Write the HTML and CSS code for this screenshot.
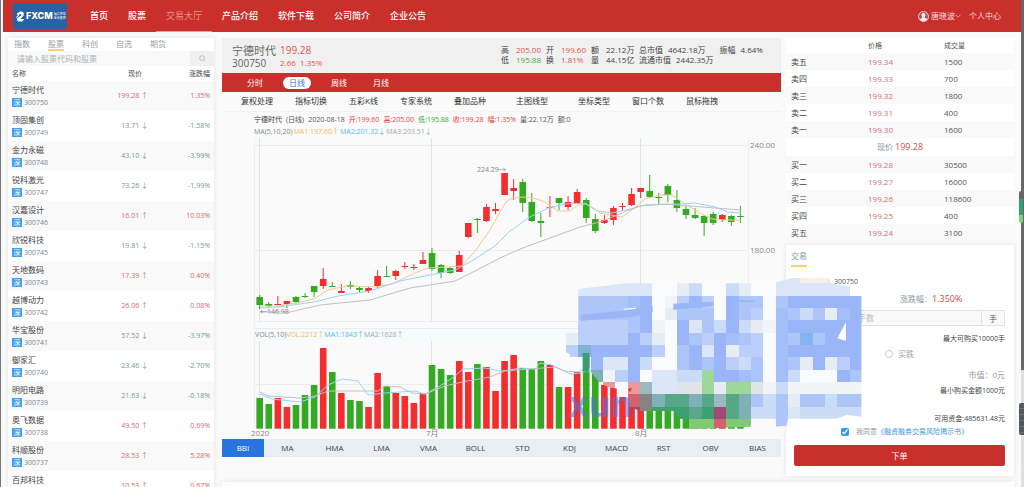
FILE: index.html
```html
<!DOCTYPE html>
<html lang="zh-CN">
<head>
<meta charset="utf-8">
<title>交易大厅</title>
<link rel="stylesheet" href="styles.css">
</head>
<body>
<div class="page">
  <header class="topbar">
    <a class="logo" href="#" aria-label="FXCM">
      <svg class="logo-mark" viewBox="0 0 9 11" aria-hidden="true">
        <path d="M1 2.6 4.2.6C7.6.2 8.8 3 7.2 5L4.6 8H8.4L6.2 10.4H2.4C.4 9.6.6 7.8 2 6.6L5 4.4C5.6 3.2 4.6 2.8 3.6 3.2L1.4 4.6Z" fill="#fff"/>
        <path d="M0 6.6 3 4.2" stroke="#fff" stroke-width="1"/>
      </svg>
      <span class="logo-name">FXCM</span>
      <span class="logo-sub"><span>福汇环球</span><span>金业集团</span></span>
    </a>
    <nav class="nav">
      <a href="#">首页</a><a href="#">股票</a><a href="#" class="active">交易大厅</a><a href="#">产品介绍</a><a href="#">软件下载</a><a href="#">公司简介</a><a href="#">企业公告</a>
    </nav>
    <div class="user">
      <svg class="avatar" viewBox="0 0 20 20" aria-hidden="true"><circle cx="10" cy="10" r="9" fill="#b9474a" stroke="#eee" stroke-width="1.6"/><path d="M10 3.5c3 0 4 2 3.6 4.6-.2 1.6-1 2.4-1.4 3.2 0 1.600 3.800 1.400 4.600 4.400C14 19 6 19 3.200 15.700c.8-3 4.600-2.800 4.600-4.400-.4-.8-1.200-1.600-1.400-3.200C6 5.500 7 3.500 10 3.500Z" fill="#eee"/></svg>
      <a href="#">唐晓波</a>
      <svg class="caret" viewBox="0 0 12 8" aria-hidden="true"><path d="M1 1.500 6 6.500 11 1.500" fill="none" stroke="#f3d5d5" stroke-width="1.400"/></svg>
      <a href="#" class="center-link">个人中心</a>
    </div>
  </header>

  <main class="main">
    <section class="stocks">
      <nav class="stock-tabs"><a href="#">指数</a><a href="#" class="active">股票</a><a href="#">科创</a><a href="#">自选</a><a href="#">期货</a></nav>
      <form class="search">
        <input type="text" aria-label="搜索股票" placeholder="请输入股票代码和股票">
        <button type="button" aria-label="搜索"><svg viewBox="0 0 16 16"><circle cx="7" cy="7" r="5.500" fill="none" stroke="#aaa" stroke-width="1.500"/><path d="m11 11 3.500 3.500" stroke="#aaa" stroke-width="1.500"/></svg></button>
      </form>
      <table class="stock-table">
        <thead><tr><th>名称</th><th>现价</th><th>涨跌幅</th></tr></thead>
        <tbody id="stock-rows"></tbody>
      </table>
    </section>

    <section class="quote">
      <div class="summary">
        <div class="summary-main">
          <span class="s-name">宁德时代</span><span class="s-price">199.28</span>
          <span class="s-code">300750</span><span class="s-change">2.66&nbsp; 1.35%</span>
        </div>
        <div class="summary-stats">
          <div><span>高</span><b class="up">205.00</b><span>开</span><b class="up">199.60</b><span>额</span><b>22.12万</b><span class="wide">总市值</span><b class="cap">4642.18万</b><span class="wide">振幅</span><b>4.64%</b></div>
          <div><span>低</span><b class="down">195.88</b><span>换</span><b class="up">1.81%</b><span>量</span><b>44.15亿</b><span class="wide">流通市值</span><b class="cap">2442.35万</b></div>
        </div>
      </div>
      <div class="periods"><button type="button">分时</button><button type="button" class="active">日线</button><button type="button">周线</button><button type="button">月线</button></div>
      <div class="tools"><a href="#">复权处理</a><a href="#">指标切换</a><a href="#">五彩K线</a><a href="#">专家系统</a><a href="#">叠加品种</a><a href="#" class="apart">主图线型</a><a href="#" class="apart">坐标类型</a><a href="#">窗口个数</a><a href="#">鼠标拖拽</a></div>
      <div class="chart-head"><span class="dark">宁德时代</span><span>(日线)</span><span>2020-08-18</span><span class="red">开:199.60</span><span class="red">高:205.00</span><span class="green">低:195.88</span><span class="red">收:199.28</span><span class="red">幅:1.35%</span><span>量:22.12万</span><span>额:0</span></div>
      <div class="chart-ma"><span>MA(5,10,20)</span><span class="ma1">MA1:197.60↑</span><span class="ma2">MA2:201.32↓</span><span class="ma3">MA3:203.51↓</span></div>
      <svg class="chart" id="chart" viewBox="222 138 559 301" role="img" aria-label="K线图"></svg>
      <div class="indicators"><button type="button" class="active">BBI</button><button type="button">MA</button><button type="button">HMA</button><button type="button">LMA</button><button type="button">VMA</button><button type="button">BOLL</button><button type="button">STD</button><button type="button">KDJ</button><button type="button">MACD</button><button type="button">RST</button><button type="button">OBV</button><button type="button">BIAS</button></div>
    </section>

    <aside class="side">
      <table class="book">
        <thead><tr><th></th><th>价格</th><th>成交量</th></tr></thead>
        <tbody>
          <tr><td>卖五</td><td>199.34</td><td>1500</td></tr>
          <tr><td>卖四</td><td>199.33</td><td>700</td></tr>
          <tr><td>卖三</td><td>199.32</td><td>1800</td></tr>
          <tr><td>卖二</td><td>199.31</td><td>400</td></tr>
          <tr><td>卖一</td><td>199.30</td><td>1600</td></tr>
          <tr class="now"><td colspan="3">现价 <b>199.28</b></td></tr>
          <tr><td>买一</td><td>199.28</td><td>30500</td></tr>
          <tr><td>买二</td><td>199.27</td><td>16000</td></tr>
          <tr><td>买三</td><td>199.26</td><td>118600</td></tr>
          <tr><td>买四</td><td>199.25</td><td>400</td></tr>
          <tr><td>买五</td><td>199.24</td><td>3100</td></tr>
        </tbody>
      </table>
      <form class="trade">
        <h2>交易</h2>
        <p class="t-symbol"><span>宁德时代</span>300750</p>
        <p class="t-rate">涨跌幅：<b>1.350%</b></p>
        <div class="t-amount"><input type="text" aria-label="手数" placeholder="请输入手数"><span>手</span></div>
        <p class="t-note">最大可购买10000手</p>
        <div class="t-side"><label><input type="radio" name="side" checked>买涨</label><label><input type="radio" name="side">买跌</label></div>
        <p class="t-value">市值：0元</p>
        <p class="t-note">最小购买金额1000元</p>
        <p class="t-note t-funds">可用资金:485631.48元</p>
        <div class="t-agree"><input type="checkbox" id="agree" checked><label for="agree">我同意</label><a href="#">《融资融券交易风险揭示书》</a></div>
        <button type="button" class="t-submit">下单</button>
      </form>
    </aside>
  </main>
  <section class="below"></section>
  <svg class="mosaic" id="mosaic" viewBox="0 0 930 480" aria-hidden="true"></svg>
  <div class="edge-left"></div>
  <div class="edge-right"></div>
  <div class="edge-meter"></div>
  <div class="edge-handle"></div>
</div>
<script src="app.js"></script>
</body>
</html>
```
FILE: styles.css
```css
* { box-sizing: border-box; }
body {
  margin: 0;
  background: #fafafa;
  color: #555;
  font: 8px/10px "Open Sans", "Noto Sans", "Noto Sans CJK SC", sans-serif;
}
a { color: inherit; text-decoration: none; }
button { font: inherit; color: inherit; border: 0; padding: 0; background: none; }
input { font: inherit; }
p, h2 { margin: 0; font-weight: 400; }
b { font-weight: 400; }
.page { position: relative; height: 100vh; overflow: hidden; }

.topbar { display: flex; align-items: center; height: 32px; margin: 0 3px; background: #c9302c; color: #fff; }
.logo { display: flex; align-items: center; gap: 1px; width: 54px; height: 26px; margin-left: 10px; padding-left: 3px; background: #2762a3; }
.logo-mark { flex: none; width: 9px; height: 11px; }
.logo-name { font: 800 9px/10px Inter, sans-serif; }
.logo-sub { display: flex; flex-direction: column; font-size: 3px; line-height: 4px; white-space: nowrap; }
.nav { display: flex; align-self: stretch; margin-left: 13px; font-size: 9px; font-weight: 500; }
.nav a { padding: 0 10px; line-height: 32px; }
.nav .active { color: #e8928f; font-weight: 400; box-shadow: inset 0 -1px #ed9b98; }
.user { display: flex; align-items: center; margin: 0 20px 0 auto; color: #f6dcdc; }
.avatar { width: 11px; height: 11px; margin-right: 2px; }
.caret { width: 6px; height: 4px; }
.center-link { margin-left: 8px; }

.main { display: grid; grid-template-columns: 206px minmax(0, 1fr) 228px; column-gap: 5px; align-items: start; height: 444px; padding: 6px 10px 0 8px; }

.stocks { background: #fff; box-shadow: 0 0 5px #e2e4e6; }
.stock-tabs { display: flex; gap: 18px; padding-left: 6px; color: #9aa0a6; }
.stock-tabs a { height: 13px; line-height: 12px; }
.stock-tabs .active { border-bottom: 2px solid #f5cf86; }
.search { display: flex; height: 15px; background: #f9f9f9; }
.search input { flex: 1; min-width: 0; border: 0; padding: 0 9px; background: none; }
.search input::placeholder { color: #aeb2b6; }
.search button { width: 24px; background: #f0f0f0; }
.search svg { display: block; width: 7px; height: 7px; margin: auto; }
.stock-table { width: 100%; border-collapse: collapse; table-layout: fixed; font-size: 7px; }
.stock-table th { height: 15px; padding: 0; font-weight: 400; color: #4c4c4c; text-align: left; }
.stock-table th:nth-child(1) { width: 98px; padding-left: 4px; }
.stock-table th:nth-child(2) { width: 42px; padding-left: 22px; }
.stock-table th:nth-child(3), .stock-table td:nth-child(3) { padding-right: 4px; text-align: right; }
.stock-table td { height: 30px; padding: 0; color: #6e9a93; }
.stock-table td:nth-child(1) { padding-left: 4px; color: #7e8790; }
.stock-table td:nth-child(2) { text-align: right; }
.stock-table tr:nth-child(odd) td { background: #f9f9f9; }
.stock-table tr.rise td:nth-child(n+2) { color: #cc6b70; }
.stock-name { display: block; margin-bottom: 3px; font-size: 8px; color: #444; }
.badge { display: inline-block; width: 10px; margin-right: 2px; line-height: 9px; text-align: center; color: #fff; background: #409ef5; }

.quote { margin-left: 3px; }
.summary { display: flex; height: 35px; padding: 6px 19px 0 10px; background: #f0f0f0; }
.summary-main { display: grid; grid-template-columns: 44px auto; column-gap: 4px; align-content: start; line-height: 13px; color: #666; }
.s-name { font-size: 11px; }
.s-code { font-size: 10px; line-height: 12px; }
.s-price { font-size: 10px; color: #e5544e; }
.s-change { color: #e5544e; line-height: 12px; }
.summary-stats { width: 261px; margin: 1px 0 0 auto; color: #444; }
.summary-stats div { display: flex; white-space: nowrap; }
.summary-stats span { flex: none; width: 15px; }
.summary-stats b { flex: none; width: 30px; }
.summary-stats .wide { width: auto; margin: 0 5px 0 3px; }
.summary-stats .cap { width: auto; margin-right: 11px; }
.summary-stats .up { color: #e5544e; }
.summary-stats .down { color: #3dae43; }
.periods { display: flex; gap: 14px; align-items: center; height: 19px; padding-left: 19px; background: #c9302c; color: #fff; }
.periods button { width: 28px; height: 12px; border-radius: 6px; }
.periods .active { background: #fff; color: #3a7be0; }
.tools { display: flex; gap: 22px; height: 20px; padding-left: 19px; line-height: 18px; white-space: nowrap; color: #333; border-bottom: 1px solid #f2f2f2; }
.tools .apart { margin-left: 8px; }
.chart-head, .chart-ma { display: flex; gap: 4px; padding-left: 32px; font-size: 7px; white-space: nowrap; }
.chart-head { padding-top: 3px; }
.chart-ma { gap: 1px; height: 13px; line-height: 13px; color: #888; }
.dark { color: #333; }
.red { color: #e5433e; }
.green { color: #34a83a; }
.ma1 { color: #f5b95a; }
.ma2 { color: #55b9ee; }
.ma3 { color: #aaa; }
.chart { display: block; width: 100%; height: auto; }
.chart text { font-size: 8px; fill: #888; }
.chart .small { font-size: 7px; }
.chart .c-orange { fill: #f5b95a; }
.chart .c-blue { fill: #55b9ee; }
.chart .c-gray { fill: #aaa; }
.indicators { display: grid; grid-template-columns: 42px repeat(11, 1fr); height: 18px; background: #e8eef3; color: #444; }
.indicators .active { background: #2a74de; color: #fff; }

.side { display: flex; flex-direction: column; gap: 4px; }
.book { width: 100%; border-collapse: collapse; table-layout: fixed; background: #fff; }
.book th, .book td { height: 17px; padding: 0; text-align: left; font-weight: 400; }
.book th { height: 15px; font-size: 7px; }
.book th:nth-child(1) { width: 82px; }
.book th:nth-child(2) { width: 76px; }
.book td:nth-child(1) { padding-left: 5px; color: #444; }
.book td:nth-child(2) { color: #d07070; }
.book tr:nth-child(odd) td { background: #f9f9f9; }
.book .now td { height: 18px; padding-left: 0; text-align: center; color: #8c97a0; background: #fff; }
.now b { font-size: 9px; color: #cf4f50; }
.trade { padding: 3px 9px 10px 5px; background: #fff; box-shadow: 0 0 5px #e2e4e6; }
.trade h2 { width: 16px; height: 19px; font-size: 8px; line-height: 16px; color: #8098a8; border-bottom: 2px solid #f5cf86; }
.t-symbol { display: flex; gap: 4px; margin: 10px 0 0 11px; font-size: 7px; }
.t-symbol span { width: 28px; color: #f0a868; }
.t-rate { margin: 6px 0 0 109px; color: #8c97a0; line-height: 11px; }
.t-rate b { font-size: 9px; color: #cc4a4a; }
.t-amount { display: flex; height: 16px; margin: 6px 0 0 30px; border: 1px solid #e2e2e2; background: #f9f9f9; }
.t-amount input { flex: 1; min-width: 0; border: 0; padding: 0 12px; background: none; }
.t-amount input::placeholder { color: #bbb; }
.t-amount span { width: 23px; line-height: 15px; text-align: center; border-left: 1px solid #e2e2e2; }
.t-note { margin-top: 8px; font-size: 7px; text-align: right; color: #444; }
.t-side { display: flex; gap: 56px; margin: 5px 0 0 9px; color: #a0a6ac; }
.t-side label { display: flex; align-items: center; gap: 5px; }
.t-side input { appearance: none; width: 8px; height: 8px; margin: 0; border: 1px solid #ccc; border-radius: 50%; background: #fff; }
.t-value { margin-top: 11px; text-align: right; color: #8c97a0; }
.t-value + .t-note { margin-top: 6px; }
.t-note.t-funds { margin-top: 18px; }
.t-agree { display: flex; align-items: center; margin: 3px 0 0 50px; font-size: 7px; color: #8c97a0; }
.t-agree a { color: #3f96d8; }
.t-agree input { width: 8px; height: 8px; margin: 0 7px 0 0; accent-color: #3498f0; }
.t-submit { display: block; width: calc(100% - 3px); height: 21px; margin: 8px 0 0 3px; border-radius: 2px; background: #c9302c; color: #fff; }

.below { height: 40px; margin: 6px 10px 0 222px; background: #fff; box-shadow: 0 0 6px #e2e4e6; }

.mosaic { position: absolute; left: 560px; top: 275px; width: 310px; height: 160px; pointer-events: none; }
.mosaic text { font: 700 108px "Liberation Sans", sans-serif; fill: #4f74e0; opacity: .55; }
.edge-left { position: absolute; left: 0; top: 0; width: 1px; height: 100%; background: #777; }
.edge-right { position: absolute; right: 0; top: 0; width: 3px; height: 100%; background: linear-gradient(#66676a 370px, #dcdfe4 370px); }
.edge-meter { position: absolute; right: 1px; top: 191px; width: 4px; height: 32px; border-radius: 2px; background: linear-gradient(#666 8px, #35a06c 8px, #35a06c 24px, #7bd36c 24px); }
.edge-handle { position: absolute; right: 0; top: 403px; width: 5px; height: 32px; border-radius: 2px 0 0 2px; background: repeating-linear-gradient(#55585c 0 5px, #66707a 5px 6px); }
```
FILE: app.js
```js
const stocks = [
  ['宁德时代', 300750, '199.28', '1.35%'], ['顶固集创', 300749, '13.71', '-1.58%'],
  ['金力永磁', 300748, '43.10', '-3.99%'], ['锐科激光', 300747, '73.26', '-1.99%'],
  ['汉嘉设计', 300746, '16.01', '10.03%'], ['欣锐科技', 300745, '19.81', '-1.15%'],
  ['天地数码', 300743, '17.39', '0.40%'], ['越博动力', 300742, '26.06', '0.08%'],
  ['华宝股份', 300741, '57.52', '-3.97%'], ['御家汇', 300740, '23.46', '-2.70%'],
  ['明阳电路', 300739, '21.63', '-0.18%'], ['奥飞数据', 300738, '49.50', '0.69%'],
  ['科顺股份', 300737, '28.53', '5.28%'], ['百邦科技', 300736, '10.53', '0.67%']
];
document.getElementById('stock-rows').innerHTML = stocks.map(([name, code, price, rate]) => {
  const rise = rate[0] !== '-';
  return `<tr class="${rise ? 'rise' : ''}"><td><span class="stock-name">${name}</span><span class="badge">深</span>${code}</td><td>${price} ${rise ? '↑' : '↓'}</td><td>${rate}</td></tr>`;
}).join('');

// Each candle: colour, body top, body bottom, high, low, volume bar top.
const candles = [
  ['g',297,305,295,309,398],['g',304,306,302,308,404],['r',304,305,296,305,398],['r',301,304,301,308,407],
  ['g',297,302,296,303,405],['g',296,297,293,298,395],['g',286,292,286,297,385],['r',279,286,268,289,348],
  ['g',286,287,282,287,372],['r',291,293,284,293,393],['g',285,287,281,289,400],['g',288,290,286,293,401],
  ['r',288,291,287,293,407],['r',276,286,270,288,373],['g',276,277,266,277,386],['r',271,276,270,280,393],
  ['r',266,267,262,269,396],['r',267,268,264,270,403],['r',260,264,252,264,393],['g',253,269,248,271,365],
  ['g',265,273,264,278,369],['g',268,273,267,274,375],['r',255,272,251,272,361],['r',223,237,223,238,372],
  ['g',219,220,218,233,364],['r',207,221,204,222,367],['r',209,211,203,214,391],['r',173,195,173,195,361],
  ['r',188,191,179,200,355],['g',182,203,179,212,368],['g',202,221,193,222,369],['g',221,223,213,237,361],
  ['r',207,208,196,217,365],['g',198,203,198,210,387],['r',202,207,196,210,387],['r',192,204,189,204,372],
  ['g',200,218,198,223,353],['g',219,231,214,233,374],['r',220,223,215,224,385],['r',208,220,206,225,387],
  ['r',206,207,203,211,397],['r',194,205,188,206,388],['r',188,192,188,198,407],['g',191,197,175,198,411],
  ['g',197,198,193,204,411],['g',186,195,184,202,411],['g',200,208,190,212,411],['g',209,215,206,219,419],
  ['g',215,218,208,219,426],['g',216,223,215,236,424],['g',214,223,212,225,426],['r',215,220,214,222,426],
  ['g',216,222,215,226,427],['g',216,217,206,223,427]
];
const colors = { g: '#33aa22', r: '#f22e2e' };
const line = (x1, y1, x2, y2, c) => `<path d="M${x1} ${y1}L${x2} ${y2}" stroke="${c}" fill="none"/>`;
const curve = (pts, c) => `<polyline points="${pts}" fill="none" stroke="${c}" stroke-linejoin="round"/>`;
let s = '<rect x="254" y="138" width="494" height="2" fill="#f5fafc"/><rect x="254" y="328" width="494" height="13" fill="#f5fafc"/>';
for (const y of [145.5, 250.5, 321.5, 328.5, 384.5]) s += line(254, y, 748, y, '#e9edf0');
for (const x of [259.5, 431.5, 640.5]) s += line(x, 138, x, 321, '#d9e6ee') + line(x, 341, x, 428, '#d9e6ee');
s += line(254.5, 138, 254.5, 428, '#edf0f2') + line(748.5, 138, 748.5, 428, '#edf0f2');
candles.forEach(([k, top, bottom, high, low, vol], i) => {
  const x = 259.7 + i * 9.07, c = colors[k];
  s += line(x, high, x, low, c);
  s += `<rect x="${x - 3.3}" y="${top}" width="6.600" height="${bottom - top}" fill="${c}"/>`;
  s += `<rect x="${x - 3.3}" y="${vol}" width="6.600" height="${428.7 - vol}" fill="${c}"/>`;
});
s += curve('260,306 278,306 296,303 314,299 328,290 347,286 375,287 392,284 415,273 428,268 447,267 462,266 476,250 490,230 500,212 506,202 512,198 522,197 534,198 545,202 558,211 570,211 578,205 586,204 600,213 622,217 635,208 645,199 660,195 672,195 685,204 700,213 712,219 725,220 741,220', '#f4c98e');
s += curve('260,308 278,307 314,302 338,296 370,291 400,281 430,275 455,270 470,262 495,246 510,231 530,217 548,208 565,204 585,203 598,211 612,213 630,209 645,205 680,204 695,203 715,207 728,212 741,213', '#9bd3f5');
s += curve('260,312 290,312 320,305 370,300 410,288 430,285 455,281 475,271 500,258 520,249 550,238 580,227 600,222 622,213 640,206 665,204 690,206 715,208 741,210', '#c4bec4');
s += curve('260,394 272,399 300,402 315,397 328,385 342,379 358,381 368,395 385,393 415,391 425,394 440,386 455,376 463,369 485,368 500,371 510,370 520,368 535,369 540,363 552,365 570,374 580,373 592,370 600,378', '#9bd3f5');
s += curve('260,392 268,396 300,398 315,396 328,391 378,391 385,386 400,387 412,393 425,394 445,386 462,382 490,377 505,371 530,369 555,367 565,371 577,372 590,367', '#c4bec4');
s += '<text class="small" x="477" y="172">224.29→</text><text class="small" x="260" y="314">←146.98</text>';
s += '<text x="750" y="148">240.00</text><text x="750" y="253">180.00</text>';
s += '<text x="251" y="436">2020</text><text x="426" y="436">7月</text><text x="635" y="436">8月</text>';
s += '<text class="small" x="255" y="337">VOL(5,10)<tspan class="c-orange">VOL:2212↑</tspan><tspan class="c-blue">MA1:1843↑</tspan><tspan class="c-gray">MA2:1628↑</tspan></text>';
document.getElementById('chart').innerHTML = s;

// Pixelated overlay: one letter per cell, mapped to a palette.
const cells = [
  '.ppppppwwgqwwqgwwpppppp.',
  '.ssssedwhrdrwdsswsdddddd',
  '.sssssdwgssswdsrwesqsged',
  '.rrrrsdhwdpsqdqghedddddd',
  'grrrrdrgwdsrdesrwesksddd',
  'rndddddrwsdpdgrrwedddddd',
  '..dppdqwwsdsdrqswesgdgrd',
  '..UhrdwppqqMddesweqwwwds',
  '...PwPAppyyMgMMyhqhhhhhh',
  '.....RBUGGUGAGUsqsgssqss',
  '.....VBTTTGTVGUqqspqqqqq',
  '..........LLRLL..s......'
];
const palette = {
  w: '#fafbfc', h: '#f2f5f8', g: '#e6edf4', p: '#dbe7f9', q: '#cadcf8', r: '#bccffa', s: '#adc5f9', e: '#a4bef9', d: '#9ab6f8',
  k: '#82b6f3', n: '#7fb2d4', y: '#e0e3e8', U: '#7fb0b8', M: '#9dd79a', P: '#e99b9b', A: '#9cb9c0', R: '#cf6470', B: '#858482',
  G: '#57a888', T: '#3da070', V: '#a14a78', L: '#80ca76'
};
let m = '<defs><clipPath id="edge"><path d="M55 42 200 25 640 25 647 22 700 8 805 8 815 26 870 34 890 50 905 50 905 425 860 420 830 431 684 431 680 452 645 455 640 431 575 431 572 455 385 462 360 430 340 408 240 408 208 395 205 345 150 338 120 325 92 290 90 262 70 246 30 246 30 238 18 232 18 175 55 145Z"/></clipPath></defs>';
m += '<text x="26" y="426">xun</text><g clip-path="url(#edge)" shape-rendering="crispEdges"><path d="M647 8H820V30H647Z" fill="#dbe7f9"/><path d="M720 4H805V24H720Z" fill="#fbeee4"/>';
cells.forEach((row, y) => [...row].forEach((c, x) => {
  if (c !== '.') m += `<rect x="${18 + x * 37}" y="${25 + y * 37}" width="37" height="37" fill="${palette[c]}"/>`;
}));
m += '</g><path d="M62 120 205 105 278 92 278 112 215 126 62 137Z M340 86 460 80 460 94 340 104Z M535 74 585 77 585 81 535 82Z" fill="#9ab6f8"/><path d="M190 101 228 98 226 102 192 104Z M858 142 832 190 858 197Z" fill="#fff"/><path d="M204 342 216 338 210 352Z" fill="#f22e2e"/><path d="M68 234H88V275L84 290H68Z" fill="#3a9c78"/>';
document.getElementById('mosaic').innerHTML = m;
```
